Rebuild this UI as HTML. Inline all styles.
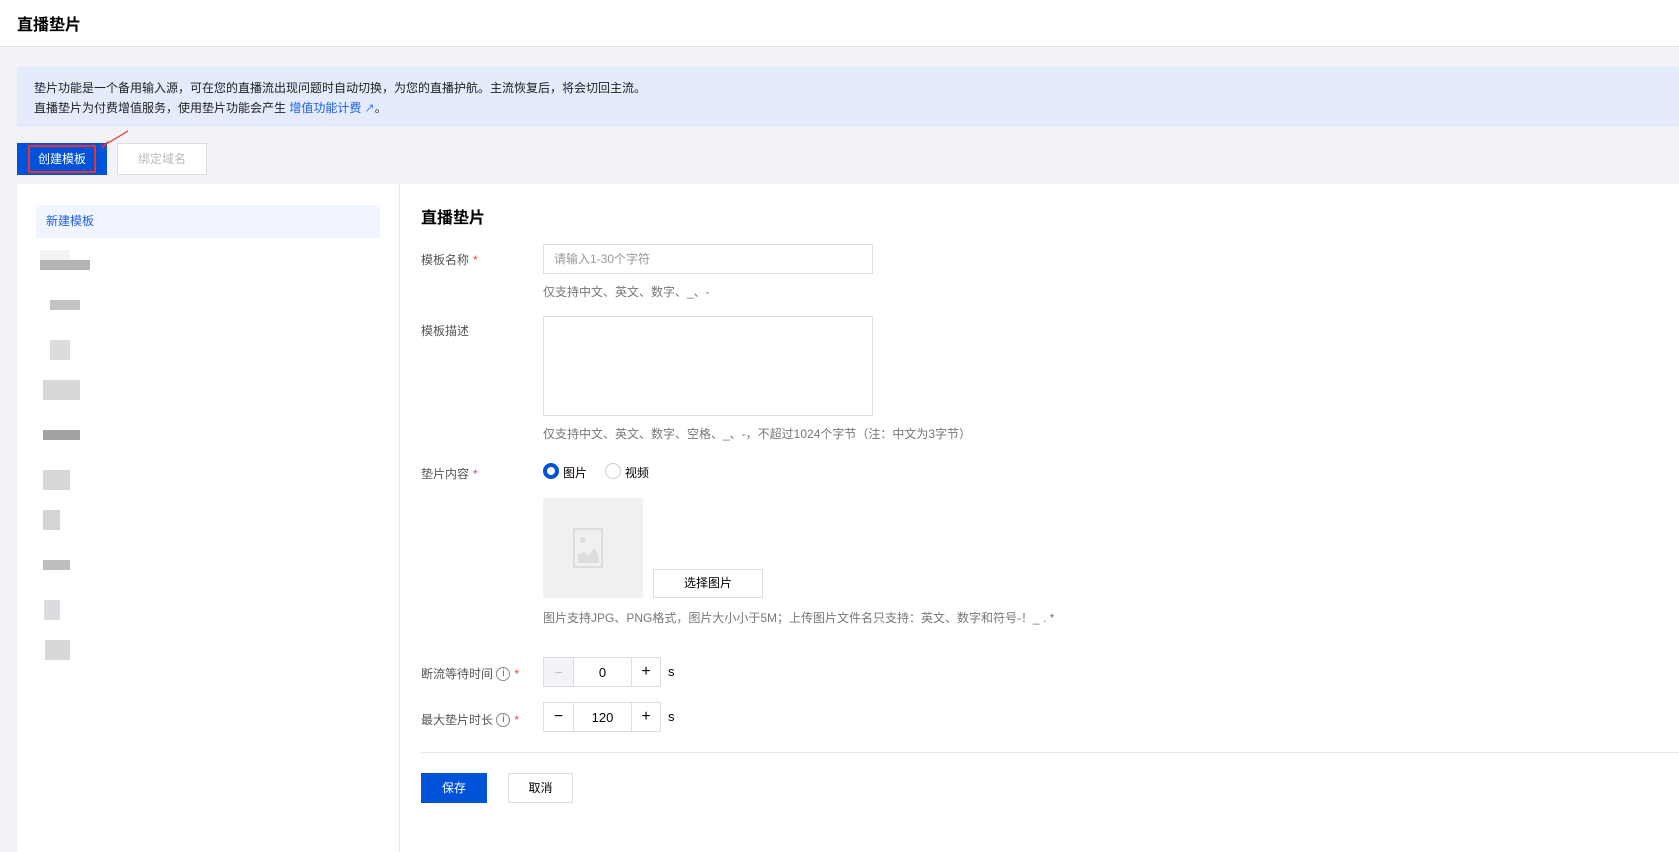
<!DOCTYPE html>
<html><head><meta charset="utf-8"><style>
*{box-sizing:border-box;margin:0;padding:0}
body{width:1679px;height:852px;overflow:hidden;background:#f2f3f8;font-family:"Liberation Sans","Noto Sans CJK SC",sans-serif;font-size:12px;color:#000;position:relative}
.a{position:absolute}
.hdr{left:0;top:0;width:1679px;height:47px;background:#fff;border-bottom:1px solid #e5e6ea}
.note{left:17px;top:67px;width:1662px;height:60px;background:#e3ebfc;padding:11px 17px;line-height:20px;color:#222}
.lbl{left:421px;color:#555;font-size:12px}
.req{color:#e54545;margin-left:4px}
.hint{left:543px;color:#777;font-size:12px}
.box{border:1px solid #dcdde3;background:#fff}
.blk{position:absolute;background:#b4b4b6}
.ic{display:inline-block;width:14px;height:14px;border:1px solid #888;border-radius:50%;text-align:center;line-height:12px;font-size:10px;vertical-align:middle;margin-top:-2px}
.step{position:absolute;left:543px;width:118px;height:30px;border:1px solid #dcdde3;background:#fff;display:flex}
.step div{display:flex;align-items:center;justify-content:center;font-size:13px;line-height:1}
</style></head><body>
<div class="a hdr"><div class="a" style="left:17px;top:11px;font-size:16px;font-weight:bold">直播垫片</div></div>
<div class="a note">垫片功能是一个备用输入源，可在您的直播流出现问题时自动切换，为您的直播护航。主流恢复后，将会切回主流。<br>直播垫片为付费增值服务，使用垫片功能会产生 <span style="color:#1f5ee8">增值功能计费 <span style="font-size:10px">↗</span></span>。</div>
<div class="a" style="left:17px;top:143px;width:90px;height:32px;background:#0052d9"></div>
<div class="a" style="left:28px;top:145px;width:68px;height:28px;border:2px solid #e53434;color:#fff;text-align:center;line-height:24px">创建模板</div>
<svg class="a" style="left:95px;top:130px" width="35" height="20"><path d="M33 1 L8 16" stroke="#e53434" stroke-width="1.2"/><path d="M4 19 L14 10 L10 17Z" fill="#e53434"/></svg>
<div class="a box" style="left:117px;top:143px;width:90px;height:32px;color:#bbb;text-align:center;line-height:30px">绑定域名</div>
<div class="a" style="left:17px;top:184px;width:383px;height:668px;background:#fff;border-right:1px solid #e5e6ea"></div>
<div class="a" style="left:400px;top:184px;width:1279px;height:668px;background:#fff"></div>
<div class="a" style="left:36px;top:205px;width:344px;height:33px;background:#f0f5ff;color:#1f5ee8;padding-left:10px;line-height:33px">新建模板</div>
<div class="blk" style="left:40px;top:260px;width:50px;height:10px;background:#b3b3b5"></div><div class="blk" style="left:40px;top:250px;width:30px;height:10px;background:#f4f2f2"></div>
<div class="blk" style="left:50px;top:300px;width:30px;height:10px;background:#c2c3c5"></div>
<div class="blk" style="left:50px;top:340px;width:20px;height:20px;background:#dcdcdc"></div>
<div class="blk" style="left:43px;top:380px;width:37px;height:20px;background:#d8d8da"></div>
<div class="blk" style="left:43px;top:430px;width:37px;height:10px;background:#a2a2a4"></div>
<div class="blk" style="left:43px;top:470px;width:27px;height:20px;background:#d6d7d9"></div>
<div class="blk" style="left:43px;top:510px;width:17px;height:20px;background:#d5d3d3"></div>
<div class="blk" style="left:43px;top:560px;width:27px;height:10px;background:#bfbebe"></div>
<div class="blk" style="left:44px;top:600px;width:16px;height:20px;background:#dcdce0"></div>
<div class="blk" style="left:45px;top:640px;width:25px;height:20px;background:#d8d8d8"></div>
<div class="a" style="left:421px;top:204px;font-size:16px;font-weight:bold">直播垫片</div>
<div class="a lbl" style="top:251px">模板名称<span class="req">*</span></div>
<div class="a box" style="left:543px;top:244px;width:330px;height:30px;color:#999;padding-left:10px;line-height:28px">请输入1-30个字符</div>
<div class="a hint" style="top:283px">仅支持中文、英文、数字、_、-</div>
<div class="a lbl" style="top:322px">模板描述</div>
<div class="a box" style="left:543px;top:316px;width:330px;height:100px"></div>
<div class="a hint" style="top:425px">仅支持中文、英文、数字、空格、_、-，不超过1024个字节（注：中文为3字节）</div>
<div class="a lbl" style="top:465px">垫片内容<span class="req">*</span></div>
<div class="a" style="left:543px;top:463px;width:16px;height:16px;border-radius:50%;border:4px solid #0052d9"></div>
<div class="a" style="left:563px;top:464px">图片</div>
<div class="a" style="left:605px;top:463px;width:16px;height:16px;border-radius:50%;border:1px solid #ccc"></div>
<div class="a" style="left:625px;top:464px">视频</div>
<div class="a" style="left:543px;top:498px;width:100px;height:100px;background:#f0f0f0"></div>
<div class="a" style="left:573px;top:528px;width:30px;height:40px;border:2px solid #ddd"></div>
<svg class="a" style="left:575px;top:530px" width="26" height="36"><circle cx="8" cy="10" r="3" fill="#ddd"/><path d="M3 33 L3 25 L9 22 L14 26 L19 18 L24 27 L24 33Z" fill="#ddd"/></svg>
<div class="a box" style="left:653px;top:569px;width:110px;height:29px;text-align:center;line-height:27px">选择图片</div>
<div class="a hint" style="top:609px">图片支持JPG、PNG格式，图片大小小于5M；上传图片文件名只支持：英文、数字和符号-！_ . *</div>
<div class="a lbl" style="top:665px">断流等待时间 <span class="ic">i</span><span class="req">*</span></div>
<div class="step" style="top:657px"><div style="width:30px;background:#f2f3f8;color:#bbb;border-right:1px solid #dcdde3">−</div><div style="width:58px;border-right:1px solid #dcdde3">0</div><div style="width:28px;font-size:16px">+</div></div>
<div class="a" style="left:668px;top:664px;font-size:13px">s</div>
<div class="a lbl" style="top:711px">最大垫片时长 <span class="ic">i</span><span class="req">*</span></div>
<div class="step" style="top:702px"><div style="width:30px;border-right:1px solid #dcdde3;font-size:16px">−</div><div style="width:58px;border-right:1px solid #dcdde3">120</div><div style="width:28px;font-size:16px">+</div></div>
<div class="a" style="left:668px;top:709px;font-size:13px">s</div>
<div class="a" style="left:421px;top:752px;width:1258px;height:1px;background:#e5e6ea"></div>
<div class="a" style="left:421px;top:773px;width:66px;height:30px;background:#0052d9;color:#fff;text-align:center;line-height:30px">保存</div>
<div class="a box" style="left:508px;top:773px;width:65px;height:30px;text-align:center;line-height:28px">取消</div>
</body></html>
